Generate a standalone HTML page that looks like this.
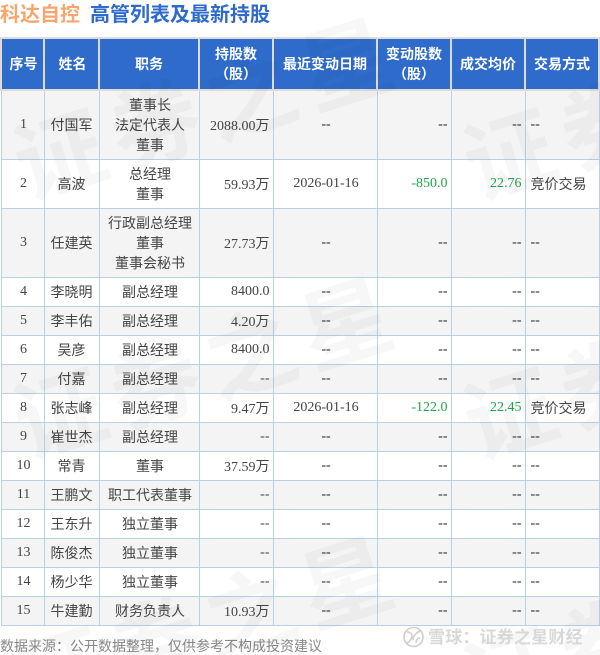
<!DOCTYPE html>
<html><head><meta charset="utf-8">
<style>
html,body{margin:0;padding:0;background:#fff}
body{width:600px;height:655px;position:relative;overflow:hidden;font-family:"Liberation Serif","WenQuanYi Zen Hei","Noto Sans CJK SC",serif;color:#444}
.t{position:absolute;top:2px;font:bold 20px/26px "Liberation Sans","Noto Sans CJK SC",sans-serif;white-space:nowrap}
table{position:absolute;left:0;top:37px;width:598px;table-layout:fixed;border-collapse:collapse;font-size:14px;line-height:20px}
th{box-sizing:border-box;background:#2e6bcb;color:#fff;font:bold 14px/20px "Liberation Sans","Noto Sans CJK SC",sans-serif;border:2px solid #dcdcdc;height:52px;padding:0;text-align:center}
th:nth-child(1),th:nth-child(2){padding-left:2px}
td{box-sizing:border-box;border:1px solid #b9d1e6;padding:0 3px 0 5px;text-align:center;height:29px;white-space:nowrap;vertical-align:middle}
td:nth-child(2){padding-left:4px;padding-right:4px}
tr.g td{background:#f4f4f4}
td.r{text-align:right}td.l{text-align:left}
td.k{color:#222}
td.c{padding-top:4px}
.gr{color:#1fa64a}
.wm{position:absolute;left:0;top:0;pointer-events:none;display:block}
.f{position:absolute;left:0;top:637px;font:14px/18px "Liberation Sans","Noto Sans CJK SC",sans-serif;color:#888;white-space:nowrap}
</style></head><body>
<div class="t" style="left:0;color:#f8a56f">科达自控</div>
<div class="t" style="left:90px;color:#2e6bcb">高管列表及最新持股</div>
<table>
<colgroup><col style="width:43px"><col style="width:55px"><col style="width:100px"><col style="width:74px"><col style="width:104px"><col style="width:74px"><col style="width:74px"><col style="width:74px"></colgroup>
<tr><th>序号</th><th>姓名</th><th>职务</th><th>持股数<br>（股）</th><th>最近变动日期</th><th>变动股数<br>（股）</th><th>成交均价</th><th>交易方式</th></tr>
<tr class="g" style="height:69px"><td style="height:69px">1</td><td class="c">付国军</td><td class="c">董事长<br>法定代表人<br>董事</td><td class="r c">2088.00万</td><td class="k">--</td><td class="r k">--</td><td class="r k">--</td><td class="l k">--</td></tr>
<tr style="height:49px"><td style="height:49px">2</td><td class="c">高波</td><td class="c">总经理<br>董事</td><td class="r c">59.93万</td><td>2026-01-16</td><td class="r gr">-850.0</td><td class="r gr">22.76</td><td class="l c">竞价交易</td></tr>
<tr class="g" style="height:69px"><td style="height:69px">3</td><td class="c">任建英</td><td class="c">行政副总经理<br>董事<br>董事会秘书</td><td class="r c">27.73万</td><td class="k">--</td><td class="r k">--</td><td class="r k">--</td><td class="l k">--</td></tr>
<tr><td>4</td><td class="c">李晓明</td><td class="c">副总经理</td><td class="r">8400.0</td><td class="k">--</td><td class="r k">--</td><td class="r k">--</td><td class="l k">--</td></tr>
<tr class="g"><td>5</td><td class="c">李丰佑</td><td class="c">副总经理</td><td class="r c">4.20万</td><td class="k">--</td><td class="r k">--</td><td class="r k">--</td><td class="l k">--</td></tr>
<tr><td>6</td><td class="c">吴彦</td><td class="c">副总经理</td><td class="r">8400.0</td><td class="k">--</td><td class="r k">--</td><td class="r k">--</td><td class="l k">--</td></tr>
<tr class="g"><td>7</td><td class="c">付嘉</td><td class="c">副总经理</td><td class="r">--</td><td class="k">--</td><td class="r k">--</td><td class="r k">--</td><td class="l k">--</td></tr>
<tr><td>8</td><td class="c">张志峰</td><td class="c">副总经理</td><td class="r c">9.47万</td><td>2026-01-16</td><td class="r gr">-122.0</td><td class="r gr">22.45</td><td class="l c">竞价交易</td></tr>
<tr class="g"><td>9</td><td class="c">崔世杰</td><td class="c">副总经理</td><td class="r">--</td><td class="k">--</td><td class="r k">--</td><td class="r k">--</td><td class="l k">--</td></tr>
<tr><td>10</td><td class="c">常青</td><td class="c">董事</td><td class="r c">37.59万</td><td class="k">--</td><td class="r k">--</td><td class="r k">--</td><td class="l k">--</td></tr>
<tr class="g"><td>11</td><td class="c">王鹏文</td><td class="c">职工代表董事</td><td class="r">--</td><td class="k">--</td><td class="r k">--</td><td class="r k">--</td><td class="l k">--</td></tr>
<tr><td>12</td><td class="c">王东升</td><td class="c">独立董事</td><td class="r">--</td><td class="k">--</td><td class="r k">--</td><td class="r k">--</td><td class="l k">--</td></tr>
<tr class="g"><td>13</td><td class="c">陈俊杰</td><td class="c">独立董事</td><td class="r">--</td><td class="k">--</td><td class="r k">--</td><td class="r k">--</td><td class="l k">--</td></tr>
<tr><td>14</td><td class="c">杨少华</td><td class="c">独立董事</td><td class="r">--</td><td class="k">--</td><td class="r k">--</td><td class="r k">--</td><td class="l k">--</td></tr>
<tr class="g"><td>15</td><td class="c">牛建勤</td><td class="c">财务负责人</td><td class="r c">10.93万</td><td class="k">--</td><td class="r k">--</td><td class="r k">--</td><td class="l k">--</td></tr>
</table>
<div class="f">数据来源：公开数据整理，仅供参考不构成投资建议</div>
<svg class="wm" width="600" height="655" viewBox="0 0 600 655">
<defs><pattern id="p" patternUnits="userSpaceOnUse" x="0" y="0" width="450" height="259">
<text transform="translate(27,200) rotate(-17.5)" font-family="'Noto Sans CJK SC',sans-serif" font-weight="700" font-size="90" letter-spacing="10" fill="#000" fill-opacity=".03">证券之星</text>
</pattern></defs>
<rect x="0" y="0" width="600" height="655" fill="url(#p)"/>
<g fill="none" stroke="#cfcfcf" stroke-width="1.6"><circle cx="413.5" cy="637" r="9.5"/><path d="M407 632c5 0 6 4 4 7s-3 4-5 4M420 631c-4 2-7 5-7 9M420 638c-2 0-4 2-4 5"/></g>
<text x="428" y="643" font-family="'Liberation Sans','Noto Sans CJK SC',sans-serif" font-size="17" letter-spacing=".2" font-weight="700" fill="#d8d8d8">雪球：证券之星财经</text>
</svg>
</body></html>
